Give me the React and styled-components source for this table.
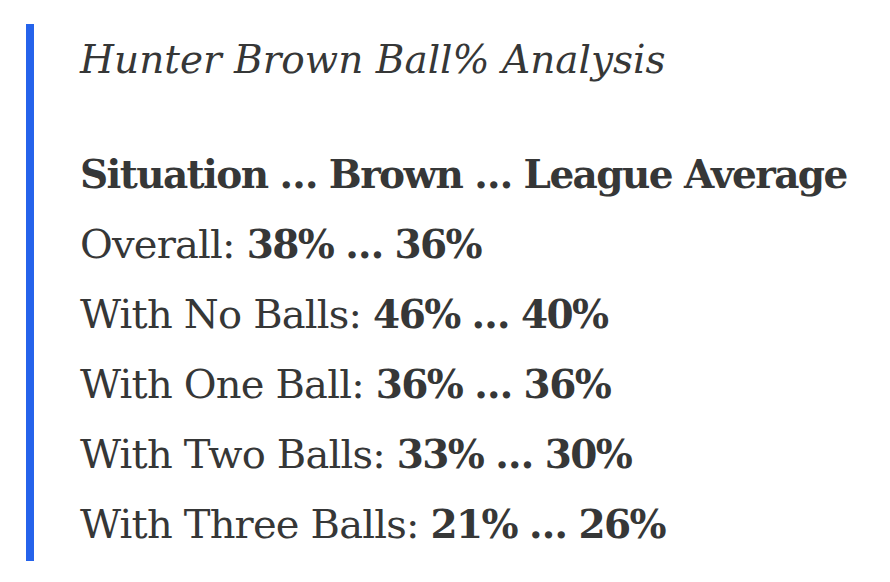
import React from 'react'
import styled, { createGlobalStyle } from 'styled-components'

const rows = [
    { label: 'Overall', brown: '38%', league: '36%' },
    { label: 'With No Balls', brown: '46%', league: '40%' },
    { label: 'With One Ball', brown: '36%', league: '36%' },
    { label: 'With Two Balls', brown: '33%', league: '30%' },
    { label: 'With Three Balls', brown: '21%', league: '26%' },
]

export default function App() {
    return (
        <>
            <GlobalStyle />
            <Quote>
                <Title>Hunter Brown Ball% Analysis</Title>
                <Lines>
                    <Line><Strong>Situation … Brown … League Average</Strong></Line>
                    {rows.map(r => (
                        <Line key={r.label}>
                            {r.label}: <Strong>{r.brown} … {r.league}</Strong>
                        </Line>
                    ))}
                </Lines>
            </Quote>
        </>
    )
}

const GlobalStyle = createGlobalStyle`
    html, body {
        margin: 0;
        padding: 0;
        background: #ffffff;
    }
`

const Quote = styled.blockquote`
    margin: 24px 0 0 26px;
    padding: 0 0 0 46px;
    border-left: 8px solid #2563eb;
    width: 800px;
    height: 537px;
    box-sizing: border-box;
    font-family: "DejaVu Serif", "Liberation Serif", serif;
    color: #363737;
    display: flex;
    flex-direction: column;
`

const Title = styled.p`
    margin: 0;
    padding-top: 12px;
    font-style: italic;
    font-size: 39px;
    line-height: 48px;
    white-space: nowrap;
`

const Lines = styled.div`
    margin-top: 55px;
    display: flex;
    flex-direction: column;
`

const Line = styled.p`
    margin: 0;
    font-size: 40px;
    line-height: 70px;
    letter-spacing: -0.8px;
    white-space: nowrap;
`

const Strong = styled.b`
    font-weight: 700;
    font-size: 39px;
    letter-spacing: -1.6px;
`
